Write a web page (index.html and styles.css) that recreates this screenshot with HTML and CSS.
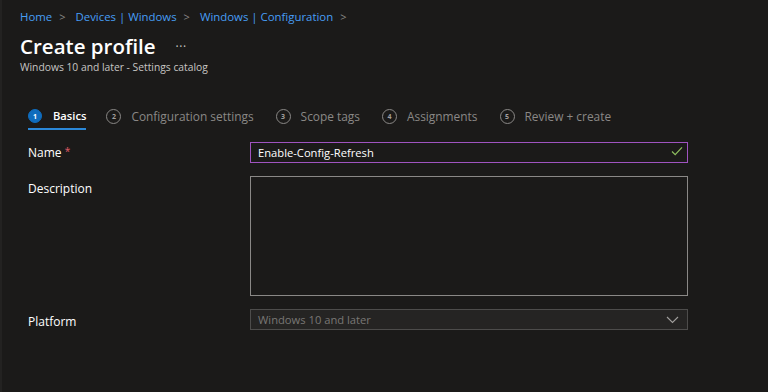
FILE: index.html
```html
<!DOCTYPE html>
<html lang="en">
<head>
    <meta charset="UTF-8">
    <meta name="viewport" content="width=device-width, initial-scale=1.0">
    <title>Create profile</title>
    <link rel="stylesheet" href="styles.css">
</head>
<body>
    <div class="page">
        <nav class="breadcrumb">
            <a href="#">Home</a><span class="sep">&gt;</span>
            <a href="#">Devices | Windows</a><span class="sep">&gt;</span>
            <a href="#">Windows | Configuration</a><span class="sep">&gt;</span>
        </nav>
        <div class="title-row">
            <h1>Create profile</h1>
            <span class="more">&middot;&middot;&middot;</span>
        </div>
        <div class="subtitle">Windows 10 and later - Settings catalog</div>

        <div class="tabs">
            <div class="tab active"><span class="num">1</span><span class="tab-label">Basics</span></div>
            <div class="tab"><span class="num">2</span><span class="tab-label">Configuration settings</span></div>
            <div class="tab"><span class="num">3</span><span class="tab-label">Scope tags</span></div>
            <div class="tab"><span class="num">4</span><span class="tab-label">Assignments</span></div>
            <div class="tab"><span class="num">5</span><span class="tab-label">Review + create</span></div>
        </div>

        <form class="form">
            <div class="form-row">
                <label for="name">Name <span class="req">*</span></label>
                <div class="field name-field">
                    <input type="text" id="name" value="Enable-Config-Refresh">
                    <svg class="check" width="12" height="10" viewBox="0 0 12 10"><path d="M1 5.5 L4.2 8.6 L11 1.4" fill="none" stroke="#8fbf5f" stroke-width="1.2"/></svg>
                </div>
            </div>
            <div class="form-row">
                <label for="desc">Description</label>
                <div class="field">
                    <textarea id="desc"></textarea>
                </div>
            </div>
            <div class="form-row">
                <label>Platform</label>
                <div class="field select">
                    <span>Windows 10 and later</span>
                    <svg width="13" height="8" viewBox="0 0 13 8"><path d="M1 1 L6.5 6.5 L12 1" fill="none" stroke="#a19f9d" stroke-width="1.1"/></svg>
                </div>
            </div>
        </form>
    </div>
</body>
</html>
```

FILE: styles.css
```css
body {
    margin: 0;
    background-color: #1b1a19;
    font-family: "Open Sans", "Noto Sans", sans-serif;
    color: #ffffff;
    height: 392px;
    overflow: hidden;
}
.page {
    border-left: 2px solid #232221;
    height: 392px;
    padding: 8px 0 0 18px;
    box-sizing: border-box;
}
.breadcrumb {
    font-size: 11.4px;
    height: 18px;
    line-height: 18px;
}
.breadcrumb a {
    color: #479ef5;
    text-decoration: none;
}
.breadcrumb .sep {
    color: #8a8886;
    margin: 0 7px;
    font-size: 11px;
}
.title-row {
    display: flex;
    align-items: center;
    margin-top: 6px;
    height: 28px;
}
h1 {
    margin: 0;
    font-size: 20.5px;
    font-weight: 600;
}
.more {
    margin-left: 20px;
    color: #c8c6c4;
    font-size: 12px;
    letter-spacing: 0.5px;
}
.subtitle {
    font-size: 10.3px;
    color: #c8c6c4;
    margin-top: 0;
}
.tabs {
    display: flex;
    margin: 33px 0 0 8px;
    height: 28px;
}
.tab {
    display: flex;
    align-items: flex-start;
    margin-right: 22px;
    color: #8a8886;
    font-size: 11.9px;
    height: 21px;
}
.tab.active {
    color: #ffffff;
    font-weight: 600;
    font-size: 11.2px;
    margin-right: 20px;
    border-bottom: 2px solid #2b88d8;
}
.num {
    width: 13px;
    height: 13px;
    border: 1px solid #8a8886;
    border-radius: 50%;
    font-size: 7px;
    font-weight: 700;
    display: flex;
    align-items: center;
    justify-content: center;
    margin: 2px 10px 0 0;
    color: #a19f9d;
}
.tab.active .num {
    background-color: #0f6cbd;
    border-color: #0f6cbd;
    color: #ffffff;
    width: 12px;
    height: 12px;
    margin-right: 11px;
}
.tab-label {
    line-height: 18px;
}
.form {
    margin: 5px 0 0 8px;
}
.form-row {
    display: flex;
    margin-bottom: 13px;
}
.form-row label {
    width: 222px;
    font-size: 12px;
    padding-top: 4px;
}
.req {
    color: #e35d6a;
    font-size: 10px;
    vertical-align: 2px;
}
.field {
    position: relative;
    width: 438px;
}
.field input, .field textarea {
    width: 100%;
    box-sizing: border-box;
    background-color: #1b1a19;
    color: #ffffff;
    font-family: inherit;
    font-size: 11.2px;
    margin: 0;
}
.field input {
    height: 21px;
    border: 1px solid #9f53c0;
    padding: 0 24px 0 7px;
    outline: none;
}
.check {
    position: absolute;
    right: 5px;
    top: 6px;
}
.field textarea {
    height: 120px;
    border: 1px solid #8a8886;
    resize: none;
    display: block;
}
.select {
    height: 21px;
    box-sizing: border-box;
    border: 1px solid #4d4c4b;
    background-color: #252423;
    display: flex;
    align-items: center;
    justify-content: space-between;
    padding: 0 8px 0 7px;
    font-size: 11.2px;
    color: #797775;
}
```
